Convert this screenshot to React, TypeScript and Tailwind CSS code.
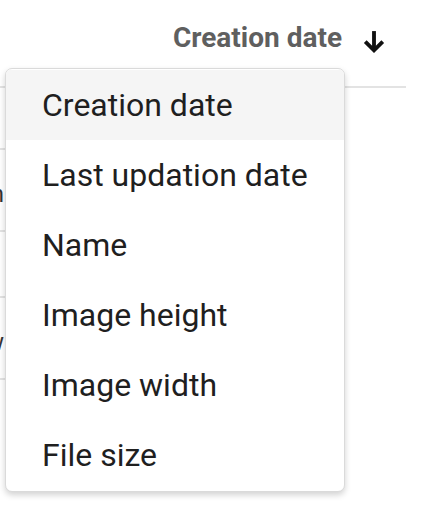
import React from "react";

const OPTIONS = [
  "Creation date",
  "Last updation date",
  "Name",
  "Image height",
  "Image width",
  "File size",
];

// rows of the list behind the menu (only their edges show)
const ROWS = [
  { h: 62, tail: "" },
  { h: 82, tail: "n" },
  { h: 66, tail: "" },
  { h: 82, tail: "w" },
];

export default function App() {
  return (
    <div
      className="relative w-[424px] h-[512px] overflow-hidden bg-white"
      style={{ fontFamily: "Roboto, 'Liberation Sans', sans-serif" }}
    >
      {/* Sort header */}
      <div className="flex h-[88px] w-[406px] items-center justify-end gap-[18px] border-b-2 border-[#e3e3e3] pr-[18px] pb-[10px]">
        <span className="text-[28px] font-bold text-[#5f5f5f] leading-none">
          Creation date
        </span>
        <svg
          viewBox="0 0 24 24"
          className="h-[28px] w-[28px] mt-[6px]"
          fill="none"
          stroke="#111"
          strokeWidth="3.3"
        >
          <path d="M12 3.5v16.5" />
          <path d="M4.5 12.5l7.5 7.5 7.5-7.5" />
        </svg>
      </div>

      {/* List rows (hidden under menu) */}
      <div className="w-[300px]">
        {ROWS.map((r, i) => (
          <div
            key={i}
            style={{ height: r.h }}
            className="relative border-b-2 border-[#e3e3e3]"
          >
            {r.tail && (
              <span className="absolute right-[296px] top-[32px] text-[24px] leading-none text-[#333]">
                {r.tail}
              </span>
            )}
          </div>
        ))}
      </div>

      {/* Dropdown menu */}
      <div className="absolute left-[5px] top-[68px] w-[340px] overflow-hidden rounded-[7px] border border-[#dadada] bg-white py-[1px] shadow-[0_3px_6px_rgba(0,0,0,0.18)]">
        {OPTIONS.map((o, i) => (
          <div
            key={o}
            className={
              "flex h-[70px] items-center pl-[36px] text-[32px] text-[#1f1f1f] " +
              (i === 0 ? "bg-[#f5f5f5]" : "")
            }
          >
            {o}
          </div>
        ))}
      </div>
    </div>
  );
}
